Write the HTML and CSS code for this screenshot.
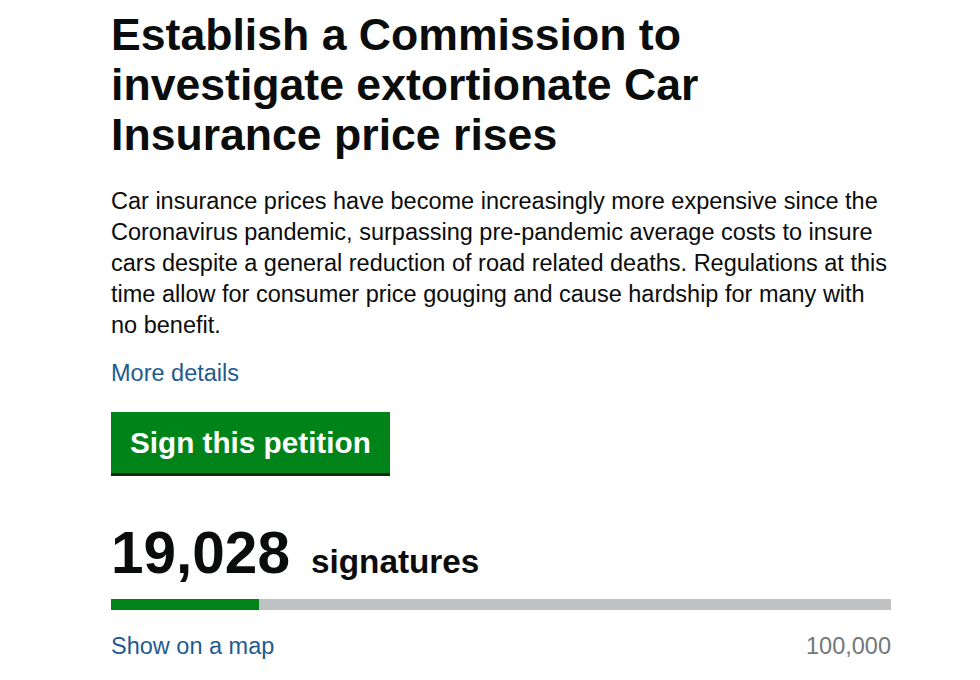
FILE: index.html
```html
<!DOCTYPE html>
<html lang="en">
<head>
<meta charset="utf-8">
<title>Petition</title>
<link rel="stylesheet" href="styles.css">
</head>
<body>
<main class="petition">
  <h1 class="title">Establish a Commission to investigate extortionate Car Insurance price rises</h1>
  <p class="summary">Car insurance prices have become increasingly more expensive since the Coronavirus pandemic, surpassing pre-pandemic average costs to insure cars despite a general reduction of road related deaths. Regulations at this time allow for consumer price gouging and cause hardship for many with no benefit.</p>
  <a class="link more" href="#">More details</a>
  <div class="actions"><a class="button" href="#">Sign this petition</a></div>
  <div class="count"><span class="count-num">19,028</span><span class="count-label">signatures</span></div>
  <div class="progress"><div class="progress-fill" style="width:19.028%"></div></div>
  <div class="progress-meta"><a class="link" href="#">Show on a map</a><span class="target">100,000</span></div>
</main>
</body>
</html>
```
FILE: styles.css
```css
html, body {
  margin: 0;
  padding: 0;
  background: #ffffff;
}
body {
  font-family: "Liberation Sans", Arial, sans-serif;
  color: #0b0c0c;
}
.petition {
  width: 780px;
  padding: 10px 0 0 111px;
}
.title {
  margin: 0;
  font-size: 44.6px;
  line-height: 50px;
  font-weight: 700;
  width: 640px;
}
.summary {
  margin: 26px 0 0;
  font-size: 23.5px;
  line-height: 31px;
}
.link {
  color: #1f5b8e;
  text-decoration: none;
}
.more {
  display: inline-block;
  margin-top: 17px;
  font-size: 23.5px;
  line-height: 31px;
}
.actions {
  margin-top: 23px;
}
.button {
  display: inline-block;
  background: #00841a;
  color: #ffffff;
  text-decoration: none;
  font-weight: 700;
  font-size: 29.7px;
  line-height: 32px;
  padding: 15px 19px 14px;
  box-shadow: 0 3px 0 #0b2a10;
}
.count {
  margin-top: 50px;
  display: flex;
  align-items: baseline;
  gap: 21px;
  height: 60px;
}
.count-num {
  font-size: 58.5px;
  line-height: 60px;
  font-weight: 700;
}
.count-label {
  font-size: 33.3px;
  line-height: 40px;
  font-weight: 700;
}
.progress {
  margin-top: 16px;
  height: 11px;
  background: #bfc1c3;
}
.progress-fill {
  height: 100%;
  background: #00841a;
}
.progress-meta {
  margin-top: 21px;
  display: flex;
  justify-content: space-between;
  align-items: baseline;
  font-size: 23.5px;
  line-height: 31px;
}
.target {
  color: #6f777b;
}
```
